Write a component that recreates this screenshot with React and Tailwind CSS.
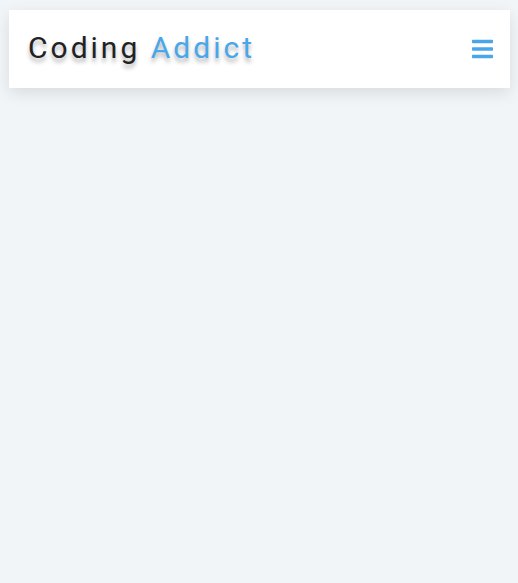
import React from "react";

export default function App() {
  return (
    <div className="min-h-[583px] w-full bg-[#f1f5f8] pt-[10px]" style={{ fontFamily: "Roboto, sans-serif" }}>
      <nav className="ml-[9px] flex h-[78px] w-[501px] items-center justify-between bg-white pl-[19px] pr-[17px] shadow-[0_5px_15px_rgba(0,0,0,0.1)]">
        <h3 className="pb-[4px] text-[30px] font-normal tracking-[3px] text-[#222] [text-shadow:0_4px_4px_rgba(0,0,0,0.3)]">
          Coding <span className="text-[#49a6e9]">Addict</span>
        </h3>
        <button className="flex h-6 w-[22px] items-center justify-center text-[#49a6e9]">
          <svg width="21" height="24" viewBox="0 0 448 512" fill="currentColor">
            <path d="M16 132h416c8.837 0 16-7.163 16-16V76c0-8.837-7.163-16-16-16H16C7.163 60 0 67.163 0 76v40c0 8.837 7.163 16 16 16zm0 160h416c8.837 0 16-7.163 16-16v-40c0-8.837-7.163-16-16-16H16c-8.837 0-16 7.163-16 16v40c0 8.837 7.163 16 16 16zm0 160h416c8.837 0 16-7.163 16-16v-40c0-8.837-7.163-16-16-16H16c-8.837 0-16 7.163-16 16v40c0 8.837 7.163 16 16 16z" />
          </svg>
        </button>
      </nav>
    </div>
  );
}
